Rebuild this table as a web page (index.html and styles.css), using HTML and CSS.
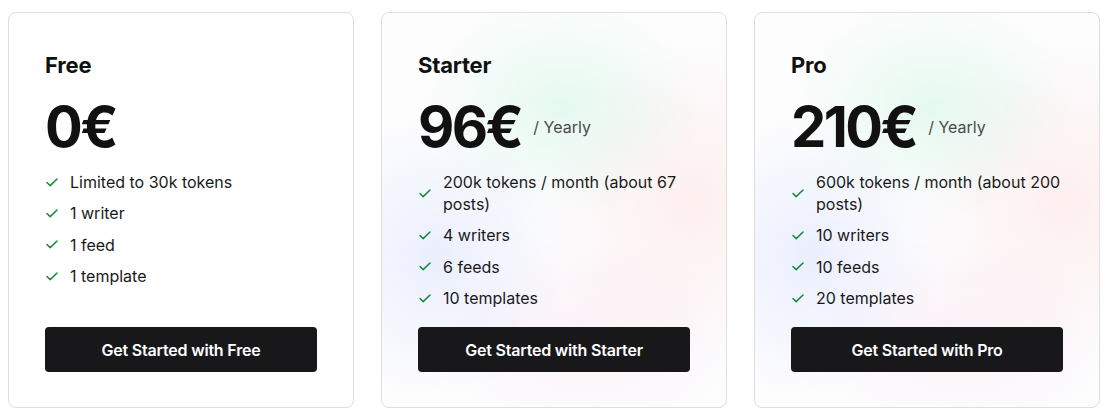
FILE: index.html
```html
<!DOCTYPE html>
<html lang="en">
<head>
<meta charset="utf-8">
<title>Pricing</title>
<link rel="stylesheet" href="styles.css">
</head>
<body>
<div class="plans">
  <div class="card">
    <h2 class="title">Free</h2>
    <div class="price-row"><span class="price">0€</span></div>
    <ul class="features">
      <li><svg class="check" viewBox="0 0 12 9"><path d="M1 4.5 L4.2 7.6 L11 1"/></svg><span>Limited to 30k tokens</span></li>
      <li><svg class="check" viewBox="0 0 12 9"><path d="M1 4.5 L4.2 7.6 L11 1"/></svg><span>1 writer</span></li>
      <li><svg class="check" viewBox="0 0 12 9"><path d="M1 4.5 L4.2 7.6 L11 1"/></svg><span>1 feed</span></li>
      <li><svg class="check" viewBox="0 0 12 9"><path d="M1 4.5 L4.2 7.6 L11 1"/></svg><span>1 template</span></li>
    </ul>
    <button class="cta">Get Started with Free</button>
  </div>
  <div class="card card-glow">
    <h2 class="title">Starter</h2>
    <div class="price-row"><span class="price">96€</span><span class="period">/ Yearly</span></div>
    <ul class="features">
      <li><svg class="check" viewBox="0 0 12 9"><path d="M1 4.5 L4.2 7.6 L11 1"/></svg><span>200k tokens / month (about 67 posts)</span></li>
      <li><svg class="check" viewBox="0 0 12 9"><path d="M1 4.5 L4.2 7.6 L11 1"/></svg><span>4 writers</span></li>
      <li><svg class="check" viewBox="0 0 12 9"><path d="M1 4.5 L4.2 7.6 L11 1"/></svg><span>6 feeds</span></li>
      <li><svg class="check" viewBox="0 0 12 9"><path d="M1 4.5 L4.2 7.6 L11 1"/></svg><span>10 templates</span></li>
    </ul>
    <button class="cta">Get Started with Starter</button>
  </div>
  <div class="card card-glow">
    <h2 class="title">Pro</h2>
    <div class="price-row"><span class="price">210€</span><span class="period">/ Yearly</span></div>
    <ul class="features">
      <li><svg class="check" viewBox="0 0 12 9"><path d="M1 4.5 L4.2 7.6 L11 1"/></svg><span>600k tokens / month (about 200 posts)</span></li>
      <li><svg class="check" viewBox="0 0 12 9"><path d="M1 4.5 L4.2 7.6 L11 1"/></svg><span>10 writers</span></li>
      <li><svg class="check" viewBox="0 0 12 9"><path d="M1 4.5 L4.2 7.6 L11 1"/></svg><span>10 feeds</span></li>
      <li><svg class="check" viewBox="0 0 12 9"><path d="M1 4.5 L4.2 7.6 L11 1"/></svg><span>20 templates</span></li>
    </ul>
    <button class="cta">Get Started with Pro</button>
  </div>
</div>
</body>
</html>
```
FILE: styles.css
```css
html, body {
  margin: 0;
  padding: 0;
  background: #ffffff;
}
body {
  padding: 12px 8px 8px;
  font-family: Inter, "Noto Sans", "Liberation Sans", sans-serif;
  color: #111111;
}
.plans {
  display: grid;
  grid-template-columns: repeat(3, 1fr);
  column-gap: 27px;
}
.card {
  display: flex;
  flex-direction: column;
  border: 1px solid #dedede;
  border-radius: 8px;
  padding: 38px 36px 35px;
  background: #ffffff;
}
.card-glow {
  background:
    radial-gradient(ellipse 140px 110px at 52% 24%, rgba(205, 245, 225, 0.5), rgba(205, 245, 225, 0) 100%),
    radial-gradient(ellipse 130px 140px at 16% 62%, rgba(216, 224, 255, 0.5), rgba(216, 224, 255, 0) 100%),
    radial-gradient(ellipse 150px 160px at 90% 48%, rgba(255, 224, 224, 0.5), rgba(255, 224, 224, 0) 100%),
    radial-gradient(ellipse 150px 100px at 60% 82%, rgba(250, 228, 240, 0.5), rgba(250, 228, 240, 0) 100%),
    #fdfdfe;
}
.title {
  margin: 0;
  font-size: 22px;
  line-height: 28px;
  font-weight: 700;
  letter-spacing: -0.2px;
}
.price-row {
  display: flex;
  align-items: center;
  gap: 12px;
  margin-top: 20px;
}
.price {
  font-size: 56px;
  line-height: 56px;
  font-weight: 700;
  letter-spacing: -2.6px;
}
.period {
  font-size: 16px;
  color: #4a4a4a;
}
.features {
  list-style: none;
  margin: 16px 0 18px;
  padding: 0;
  flex: 1;
  display: flex;
  flex-direction: column;
  gap: 9.4px;
}
.features li {
  display: flex;
  align-items: center;
  gap: 12px;
  font-size: 16px;
  line-height: 22px;
  color: #1a1a1a;
}
.check {
  flex: none;
  width: 12px;
  height: 9px;
  margin-left: 1px;
  fill: none;
  stroke: #15883e;
  stroke-width: 1.5;
  stroke-linecap: round;
  stroke-linejoin: round;
}
.cta {
  display: block;
  width: 100%;
  height: 45px;
  border: none;
  border-radius: 4px;
  background: #18181a;
  color: #ffffff;
  font-family: Inter, "Noto Sans", "Liberation Sans", sans-serif;
  font-size: 16px;
  font-weight: 600;
  letter-spacing: -0.2px;
  cursor: pointer;
}
```
